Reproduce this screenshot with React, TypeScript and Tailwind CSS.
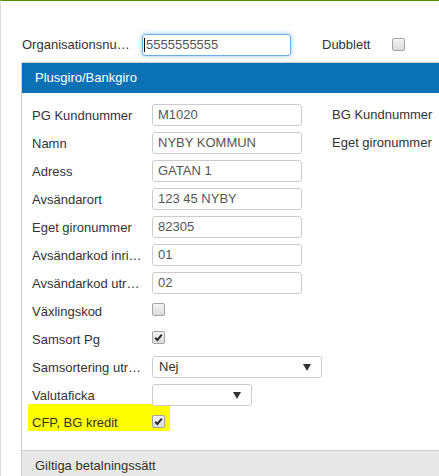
import React from "react";

function Checkbox({ checked = false }: { checked?: boolean }) {
  return (
    <span className="flex h-[13px] w-[13px] shrink-0 items-center justify-center rounded-[2px] border border-[#a3a3a3] bg-gradient-to-b from-[#f4f4f4] to-[#dadada]">
      {checked && (
        <svg width="9" height="9" viewBox="0 0 9 9">
          <path d="M1.2 4.8 L3.4 7 L7.8 1.6" fill="none" stroke="#2b2b2b" strokeWidth="2" />
        </svg>
      )}
    </span>
  );
}

function TextInput({ value }: { value: string }) {
  return (
    <div className="flex h-[22px] w-[150px] items-center rounded-[3px] border border-[#cccccc] bg-white pl-[5px] text-[13px] text-[#555]">
      {value}
    </div>
  );
}

function Select({ value, width }: { value: string; width: string }) {
  return (
    <div className={`flex h-[22px] ${width} items-center justify-between rounded-[3px] border border-[#cccccc] bg-white pl-[6px] pr-[10px] text-[13px] text-[#333]`}>
      <span>{value}</span>
      <svg width="8" height="7" viewBox="0 0 8 7">
        <path d="M0 0 L8 0 L4 7 Z" fill="#333" />
      </svg>
    </div>
  );
}

function Row({ label, children }: { label: string; children?: React.ReactNode }) {
  return (
    <div className="mb-[6px] flex h-[22px] items-center">
      <span className="w-[120px] shrink-0 whitespace-nowrap leading-[15px]">{label}</span>
      {children}
    </div>
  );
}

export default function App() {
  return (
    <div
      className="relative h-[476px] w-[439px] overflow-hidden border-l border-t border-l-[#dddddd] border-t-[#4f8f00] bg-white text-[13px] text-[#333]"
      style={{ fontFamily: '"Liberation Sans", Arial, sans-serif' }}
    >
      <div className="mt-[33px] flex h-[22px] items-center pl-[21px]">
        <span className="w-[120px] shrink-0 whitespace-nowrap">Organisationsnu…</span>
        <div className="flex h-[22px] w-[149px] items-center rounded-[3px] border border-[#66afe9] pl-[1px] text-[13px] text-[#555] shadow-[0_0_5px_rgba(102,175,233,0.7)]">
          <span className="mr-[1px] h-[14px] w-px bg-black" />
          5555555555
        </div>
        <span className="ml-[31px] w-[70px]">Dubblett</span>
        <span className="-mt-[1px]">
          <Checkbox />
        </span>
      </div>

      <div className="ml-[20px] mt-[6px] w-[600px] border border-[#cccccc]">
        <div className="flex h-[30px] items-center bg-[#0a72b4] pl-[13px] text-[13px] text-white">
          Plusgiro/Bankgiro
        </div>
        <div className="flex pb-[19px] pl-[10px] pt-[11px]">
          <div className="w-[300px] shrink-0">
            <Row label="PG Kundnummer"><TextInput value="M1020" /></Row>
            <Row label="Namn"><TextInput value="NYBY KOMMUN" /></Row>
            <Row label="Adress"><TextInput value="GATAN 1" /></Row>
            <Row label="Avsändarort"><TextInput value="123 45 NYBY" /></Row>
            <Row label="Eget gironummer"><TextInput value="82305" /></Row>
            <Row label="Avsändarkod inri…"><TextInput value="01" /></Row>
            <Row label="Avsändarkod utr…"><TextInput value="02" /></Row>
            <Row label="Växlingskod">
              <span className="-mt-[4px]"><Checkbox /></span>
            </Row>
            <Row label="Samsort Pg">
              <span className="-mt-[4px]"><Checkbox checked /></span>
            </Row>
            <Row label="Samsortering utr…"><Select value="Nej" width="w-[170px]" /></Row>
            <Row label="Valutaficka"><Select value="" width="w-[100px]" /></Row>
            <div className="-ml-[4px] -mt-[8px] flex h-[27px] w-[142px] items-start bg-[#ffff00] pl-[4px] pt-[11px]">
              <span className="w-[120px] shrink-0 whitespace-nowrap leading-[15px]">CFP, BG kredit</span>
              <span className="mt-[0px]"><Checkbox checked /></span>
            </div>
          </div>
          <div className="shrink-0">
            <div className="mb-[6px] flex h-[22px] items-center">BG Kundnummer</div>
            <div className="mb-[6px] flex h-[22px] items-center">Eget gironummer</div>
          </div>
        </div>
        <div className="flex h-[30px] items-center border-t border-[#cccccc] bg-[#e8e8e8] pl-[13px] text-[13px] text-[#333]">
          Giltiga betalningssätt
        </div>
      </div>
    </div>
  );
}
